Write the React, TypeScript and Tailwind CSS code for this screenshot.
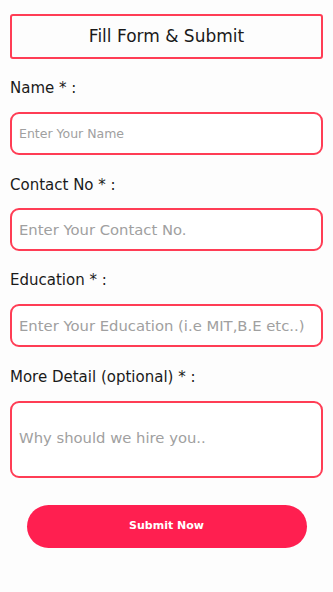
import { useState } from "react";

const field =
  "w-full h-[43px] rounded-[9px] border-2 border-[#ff3d55] bg-white px-[7px] text-[#333] outline-none placeholder:text-[#a0a0a0]";

const App = () => {
  const [name, setName] = useState("");
  const [contact, setContact] = useState("");
  const [education, setEducation] = useState("");
  const [detail, setDetail] = useState("");

  return (
    <div className="min-h-[592px] w-[333px] bg-[#fdfdfd] px-[10px] pt-[14px] font-['DejaVu_Sans',sans-serif] text-[#1a1a1a]">
      <div className="flex h-[45px] items-center justify-center rounded-[3px] border-2 border-[#ff3d55] text-[17px]">
        Fill Form &amp; Submit
      </div>

      <label className="mt-[19px] block text-[15px] leading-[20px]">Name * :</label>
      <input
        className={field + " mt-[14px] text-[12.5px]"}
        placeholder="Enter Your Name"
        value={name}
        onChange={(e) => setName(e.target.value)}
      />

      <label className="mt-[20px] block text-[15px] leading-[20px]">Contact No * :</label>
      <input
        className={field + " mt-[13px] text-[14.8px]"}
        placeholder="Enter Your Contact No."
        value={contact}
        onChange={(e) => setContact(e.target.value)}
      />

      <label className="mt-[19px] block text-[15px] leading-[20px]">Education * :</label>
      <input
        className={field + " mt-[14px] text-[14.8px]"}
        placeholder="Enter Your Education (i.e MIT,B.E etc..)"
        value={education}
        onChange={(e) => setEducation(e.target.value)}
      />

      <label className="mt-[20px] block text-[15px] leading-[20px]">More Detail (optional) * :</label>
      <textarea
        className="mt-[14px] block h-[77px] w-full resize-none rounded-[9px] border-2 border-[#ff3d55] bg-white px-[7px] pt-[24px] text-[14.8px] text-[#333] outline-none placeholder:text-[#a0a0a0]"
        placeholder="Why should we hire you.."
        value={detail}
        onChange={(e) => setDetail(e.target.value)}
      />

      <div className="mt-[27px] flex justify-center">
        <button className="h-[43px] w-[280px] rounded-full bg-[#ff1f50] text-[11px] font-semibold text-white">
          Submit Now
        </button>
      </div>
    </div>
  );
};

export default App;
